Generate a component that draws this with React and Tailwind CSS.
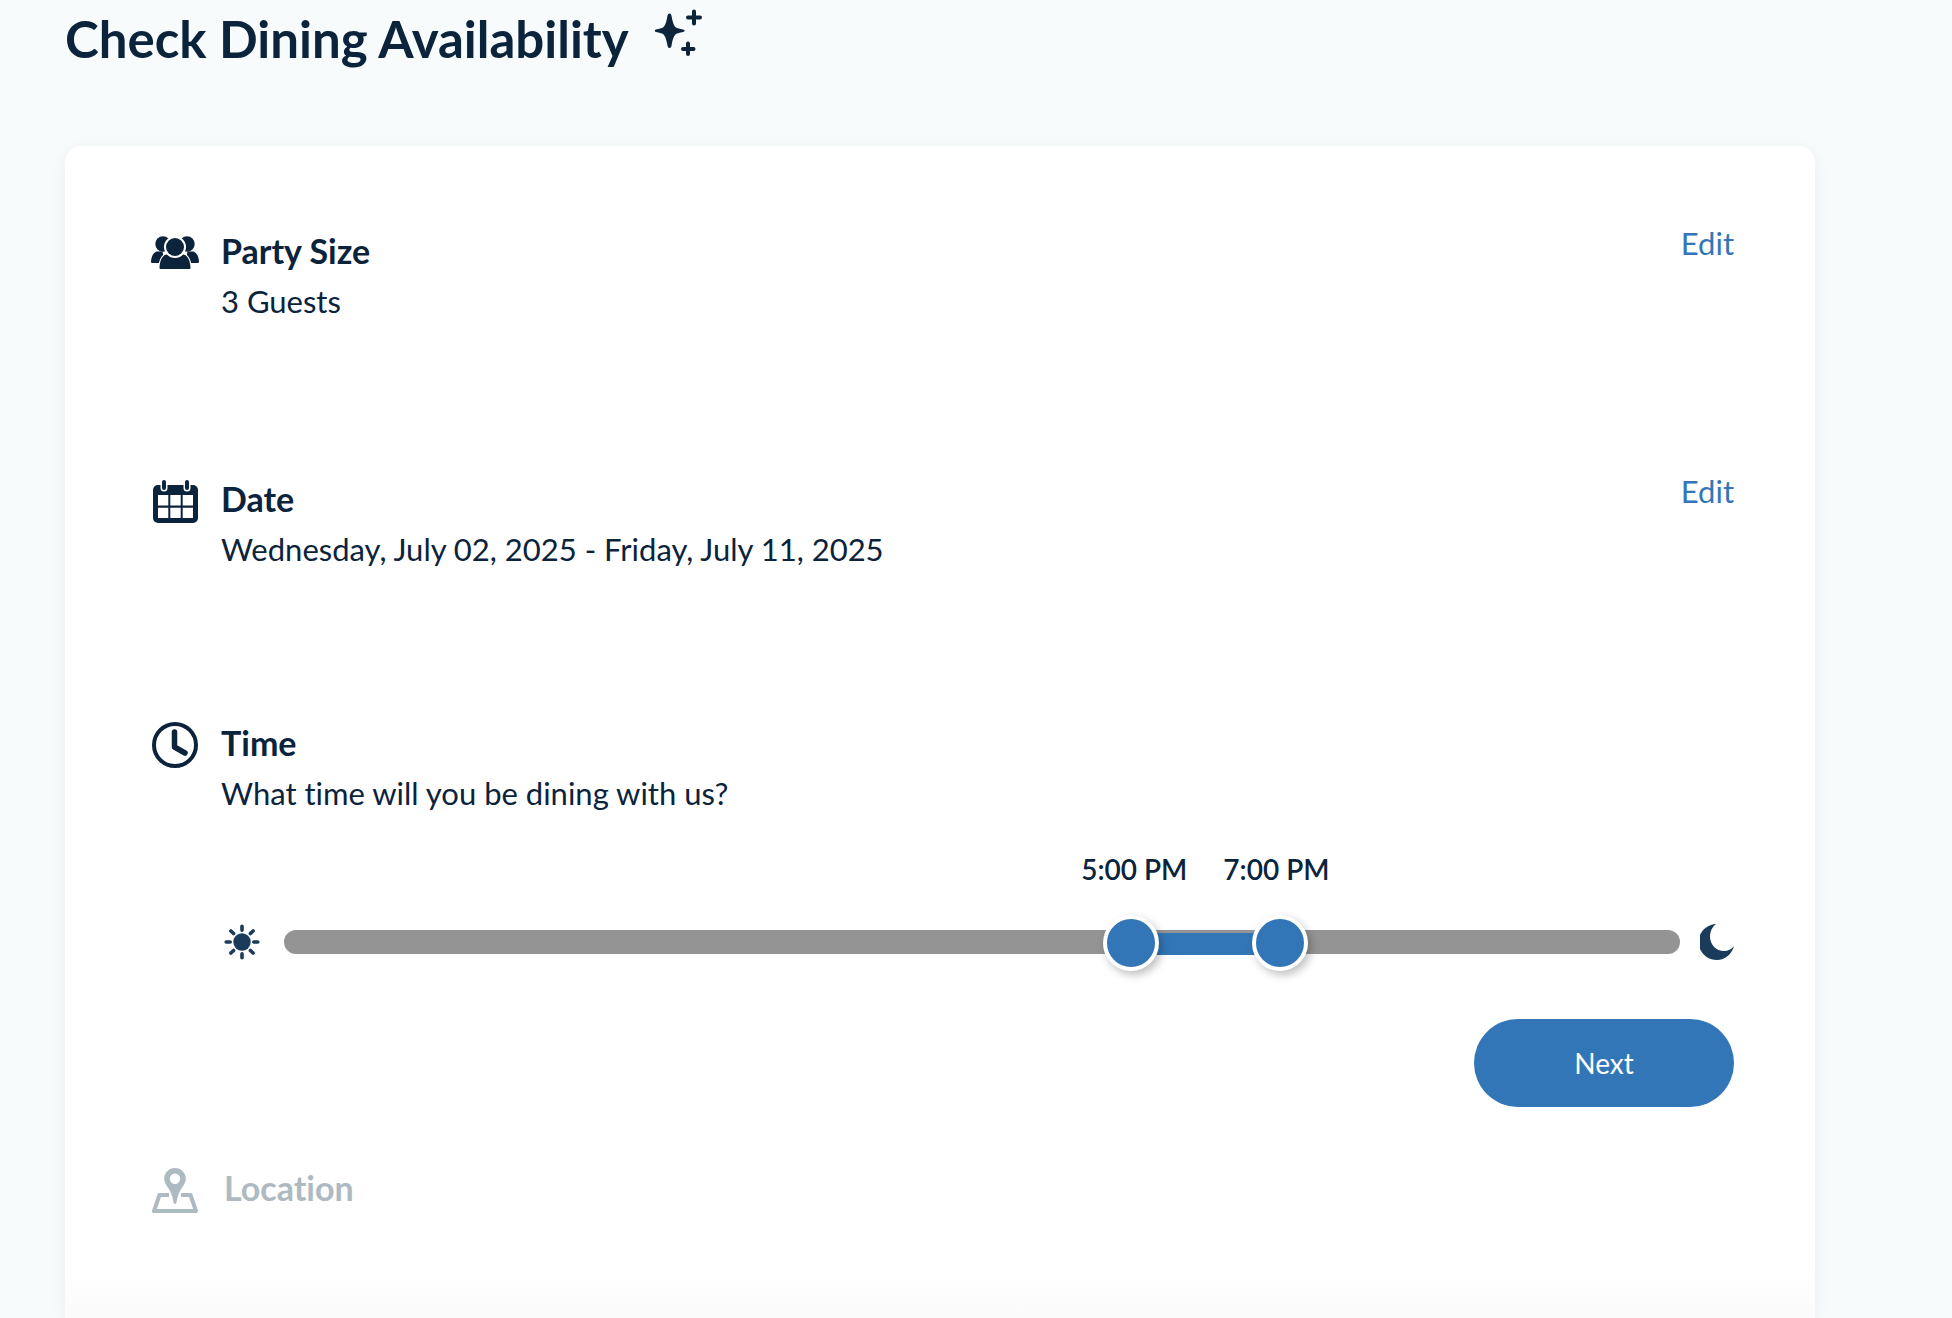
import React, { useState } from "react";

const FIRST_HOUR = 6;
const LAST_HOUR = 24;

const formatHour = (value) => {
  const hour = Math.floor(value) % 24;
  const minutes = value % 1 ? "30" : "00";
  return `${hour % 12 || 12}:${minutes} ${hour < 12 ? "AM" : "PM"}`;
};

const SparkleIcon = () => (
  <svg viewBox="0 0 47 48" className="w-[47px] h-12" fill="currentColor" aria-hidden="true">
    <path d="M14.500 5.500c1.300 0 1.800.8 2.200 3.200 1 6.500 2.800 9.800 4.300 10.800 1.300.9 3.500 1.400 7 2.100 2.200.5 2.200 1.800 0 2.300-3.500.7-5.700 1.200-7 2.100-1.500 1-3.300 4.300-4.300 10.800-.4 2.400-.9 3.200-2.200 3.200s-1.800-.8-2.200-3.200C11.300 30.300 9.500 27 8 26c-1.300-.9-3.500-1.400-7-2.100-2.200-.5-2.200-1.800 0-2.300 3.500-.7 5.700-1.200 7-2.100 1.500-1 3.300-4.300 4.300-10.800.4-2.400.9-3.200 2.200-3.200z" />
    <path d="M39 3.500v12M33 9.500h12M33 35.500v10.500M28 41h10.500" stroke="currentColor" strokeWidth="4" strokeLinecap="round" />
  </svg>
);

const GuestsIcon = () => (
  <svg viewBox="0 0 48 34" className="w-12 h-[34px]" fill="currentColor" aria-hidden="true">
    <circle cx="12" cy="8" r="7.700" />
    <circle cx="36" cy="8" r="7.700" />
    <path d="M1 27c-.7 0-1-.5-1-1.200C.2 21 2 17 5.500 15.500h6L14 27zM47 27c.7 0 1-.5 1-1.200-.2-4.800-2-8.800-5.500-10.300h-6L34 27z" />
    <path d="M10 33c-1 0-1.600-.6-1.500-1.600C9 25 10.500 20.500 15 18.500h18c4.500 2 6 6.500 6.500 12.900.1 1-.5 1.600-1.500 1.600z" stroke="white" strokeWidth="2.500" paintOrder="stroke" />
    <circle cx="24" cy="11" r="9" stroke="white" strokeWidth="4" paintOrder="stroke" />
  </svg>
);

const CalendarIcon = () => (
  <svg viewBox="0 0 45 43" className="w-[45px] h-[43px]" fill="currentColor" aria-hidden="true">
    <rect x="0" y="5" width="45" height="38" rx="5" />
    <path d="M5 15h10.300v10.500H5zM17.300 15h10.400v10.500H17.300zM29.700 15H40v10.500H29.700zM5 27.700h10.300V38H5zM17.300 27.700h10.400V38H17.300zM29.700 27.700H40V38H29.700z" fill="white" />
    <path d="M11 2v6M34 2v6" stroke="white" strokeWidth="7" strokeLinecap="round" />
    <path d="M11 2v6M34 2v6" stroke="currentColor" strokeWidth="4" strokeLinecap="round" />
  </svg>
);

const ClockIcon = () => (
  <svg viewBox="0 0 48 48" className="w-12 h-12" fill="none" stroke="currentColor" aria-hidden="true">
    <circle cx="24" cy="24" r="21" strokeWidth="4" />
    <path d="M23.500 11v15l10.500 6" strokeWidth="5.500" strokeLinecap="round" strokeLinejoin="round" />
  </svg>
);

const LocationIcon = () => (
  <svg viewBox="0 0 46 45" className="w-[46px] h-[45px]" fill="currentColor" aria-hidden="true">
    <path fillRule="evenodd" d="M23 0c6 0 10.800 4.800 10.800 10.800 0 3-1.500 5.700-3.300 8.200-3.500 5-5 9-5.700 14-.3 2.200-.9 3-1.800 3s-1.500-.8-1.800-3c-.7-5-2.200-9-5.700-14-1.800-2.500-3.300-5.200-3.300-8.200C12.200 4.800 17 0 23 0zm0 5.600a5.200 5.200 0 1 0 0 10.400 5.200 5.200 0 0 0 0-10.400z" />
    <path d="M17 27H7.500L2 43h42l-5.500-16H29" fill="none" stroke="currentColor" strokeWidth="4" strokeLinejoin="round" />
  </svg>
);

const SunIcon = () => (
  <svg viewBox="0 0 36 36" className="w-9 h-9 shrink-0" fill="currentColor" aria-hidden="true">
    <circle cx="18" cy="18" r="8.700" />
    <path d="M18 2.200v4M18 29.800v4M2.200 18h4M29.800 18h4M6.900 6.900l2.700 2.700M26.400 26.400l2.700 2.700M6.900 29.100l2.700-2.700M26.400 9.600l2.700-2.700" stroke="currentColor" strokeWidth="3.600" strokeLinecap="round" />
  </svg>
);

const MoonIcon = () => (
  <svg viewBox="0 0 34 36" className="w-[34px] h-9 shrink-0" fill="currentColor" aria-hidden="true">
    <path d="M16 0C12 3 10 7.500 10 12.500 10 21 16.500 27 24 27c4 0 7.500-1.500 10-5C32 30 25 36 17 36 9 36 3 31.500 0 25V11C3 4.500 9 .5 16 0z" />
  </svg>
);

const Section = ({ icon, title, detail, onEdit, className, children }) => (
  <section className={`flex ${className}`}>
    <div className="flex items-center justify-center w-12 h-11 shrink-0">{icon}</div>
    <div className="flex-1">
      <div className="flex items-start justify-between">
        <div>
          <h2 className="text-[34px] leading-10 font-bold">{title}</h2>
          {detail && <p className="mt-2.5 text-[31px] leading-10">{detail}</p>}
        </div>
        {onEdit && (
          <button
            type="button"
            aria-label={`Edit ${title}`}
            onClick={onEdit}
            className="-mt-2 text-[31px] leading-10 text-[#3276b7]"
          >
            Edit
          </button>
        )}
      </div>
      {children}
    </div>
  </section>
);

const thumbClasses =
  "absolute inset-x-0 -top-[15px] w-full h-14 m-0 bg-transparent appearance-none pointer-events-none [&::-webkit-slider-thumb]:pointer-events-auto [&::-webkit-slider-thumb]:appearance-none [&::-webkit-slider-thumb]:box-border [&::-webkit-slider-thumb]:w-14 [&::-webkit-slider-thumb]:h-14 [&::-webkit-slider-thumb]:rounded-full [&::-webkit-slider-thumb]:border-4 [&::-webkit-slider-thumb]:border-white [&::-webkit-slider-thumb]:bg-[#3276b7] [&::-webkit-slider-thumb]:shadow-[3px_4px_8px_rgba(0,0,0,0.25)]";

const TimeRange = () => {
  const [start, setStart] = useState(17);
  const [end, setEnd] = useState(19);

  const percent = (value) =>
    ((value - FIRST_HOUR) / (LAST_HOUR - FIRST_HOUR)) * 100;

  return (
    <div className="flex items-center gap-5 pl-[3px] mt-[117px] h-6">
      <span className="flex mr-1 text-[#1b3b5b]">
        <SunIcon />
      </span>
      <div className="relative flex-1 h-6 rounded-full bg-[#949494]">
        {/* the thumbs travel inside the track, so the fill is inset by half a thumb */}
        <div className="absolute inset-x-7 top-[3px] h-[22px]">
          <div
            className="absolute h-full bg-[#3276b7]"
            style={{
              left: `${percent(start)}%`,
              width: `${percent(end) - percent(start)}%`,
            }}
          />
          <div
            className="absolute flex -translate-x-1/2 gap-9 bottom-[68px] whitespace-nowrap text-[28px] leading-9 font-semibold"
            style={{ left: `${(percent(start) + percent(end)) / 2}%` }}
          >
            <span>{formatHour(start)}</span>
            <span>{formatHour(end)}</span>
          </div>
        </div>
        <input
          type="range"
          aria-label="Earliest time"
          min={FIRST_HOUR}
          max={LAST_HOUR}
          step={0.5}
          value={start}
          onChange={(e) => setStart(Math.min(Number(e.target.value), end - 0.5))}
          className={thumbClasses}
        />
        <input
          type="range"
          aria-label="Latest time"
          min={FIRST_HOUR}
          max={LAST_HOUR}
          step={0.5}
          value={end}
          onChange={(e) => setEnd(Math.max(Number(e.target.value), start + 0.5))}
          className={thumbClasses}
        />
      </div>
      <span className="flex text-[#1b3b5b]">
        <MoonIcon />
      </span>
    </div>
  );
};

export default function App() {
  const handleEdit = () => {};

  return (
    <main className="flex flex-col min-h-screen bg-[#f8fbfc] pl-[65px] pr-[137px] font-['Lato',sans-serif] [font-variant-ligatures:none] text-[#0b233b]">
      <header className="flex items-start gap-[26px] pt-2">
        <h1 className="text-[51px] leading-[62px] font-bold">Check Dining Availability</h1>
        <SparkleIcon />
      </header>

      <div className="flex flex-col flex-1 mt-19 bg-white rounded-t-2xl shadow-[0_4px_16px_rgba(11,35,59,0.06)]">
        <div className="pt-[85px] pl-[86px] pr-[81px]">
          <Section
            className="gap-[22px]"
            icon={<GuestsIcon />}
            title="Party Size"
            detail="3 Guests"
            onEdit={handleEdit}
          />
          <Section
            className="gap-[22px] mt-[158px]"
            icon={<CalendarIcon />}
            title="Date"
            detail="Wednesday, July 02, 2025 - Friday, July 11, 2025"
            onEdit={handleEdit}
          />
          <Section
            className="gap-[22px] mt-[154px]"
            icon={<ClockIcon />}
            title="Time"
            detail="What time will you be dining with us?"
          >
            <TimeRange />
            <div className="flex justify-end mt-[65px]">
              <button
                type="button"
                className="w-[260px] h-[88px] rounded-full bg-[#3276b7] text-[28px] text-white"
              >
                Next
              </button>
            </div>
          </Section>
          <Section
            className="gap-[25px] mt-[61px] text-[#aebac1]"
            icon={<LocationIcon />}
            title="Location"
          />
        </div>
        <div className="h-12 mt-auto bg-linear-to-b from-white to-[#fbfbfb]" />
      </div>
    </main>
  );
}
